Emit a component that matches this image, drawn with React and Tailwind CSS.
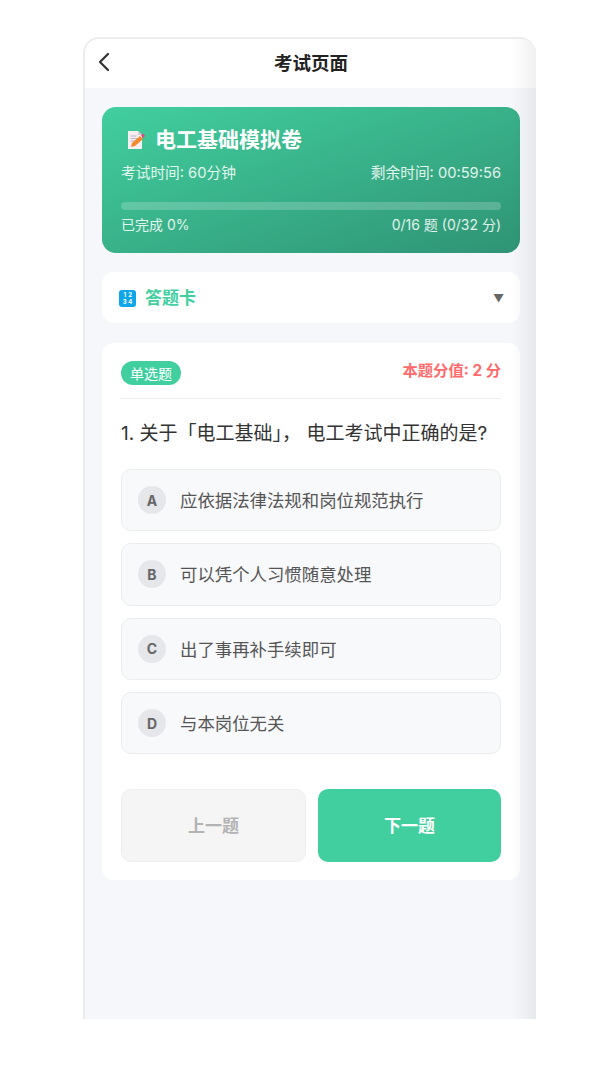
import { ChevronLeft } from 'lucide-react';

const options = [
  { key: 'A', text: '应依据法律法规和岗位规范执行' },
  { key: 'B', text: '可以凭个人习惯随意处理' },
  { key: 'C', text: '出了事再补手续即可' },
  { key: 'D', text: '与本岗位无关' },
];

// Memo emoji, drawn because no colour emoji font is available
const MemoIcon = () => (
  <svg width="22" height="22" viewBox="0 0 22 22" className="shrink-0">
    <path d="M3 2h10l4 4v14H3z" fill="#f6eef0" />
    <path d="M13 2l4 4h-4z" fill="#d9c8d4" />
    <path d="M5.500 7h6M5.500 9.500h8M5.500 12h5" stroke="#c3b4c9" strokeWidth="1" />
    <path d="M6 18l1-4 8-7 3 3-8 7z" fill="#f58a2c" />
    <path d="M16 6l2-1.500 2 2.500-2 2z" fill="#e8457c" />
  </svg>
);

const NumbersIcon = () => (
  <span className="mt-[1px] grid h-[17px] w-[17px] grid-cols-2 place-items-center rounded-[3px] bg-[#0ea5e9] px-[3px] py-[1px] text-[6px] font-bold leading-[7px] text-white">
    <span>1</span>
    <span>2</span>
    <span>3</span>
    <span>4</span>
  </span>
);

export default function App() {
  return (
    <div
      className="h-[1080px] bg-white pl-[83px] pt-[37px] text-[#333]"
      style={{ fontFamily: 'Inter, "Noto Sans CJK SC", sans-serif' }}
    >
      <div className="relative flex h-[982px] w-[453px] flex-col overflow-hidden rounded-t-[16px] border-l-2 border-t-2 border-[#ececec] bg-[#f5f7fa]">
        {/* Header */}
        <div className="flex h-[49px] shrink-0 items-center bg-white">
          <ChevronLeft className="ml-[3px] -mt-[3px] h-[32px] w-[32px] text-[#333]" strokeWidth={1.7} />
          <h1 className="ml-[154px] text-[18.500px] font-bold text-[#222]">考试页面</h1>
        </div>

        <div className="flex flex-col pl-[17px] pr-[17px] pt-[19px]">
          {/* Exam summary */}
          <div className="h-[146px] w-[418px] rounded-[14px] bg-gradient-to-br from-[#42cf9f] to-[#2f9474] px-[19px] pt-[19px] text-white">
            <div className="flex h-[28px] items-center gap-[8px] pl-[4px]">
              <MemoIcon />
              <span className="text-[21px] font-bold leading-[28px]">电工基础模拟卷</span>
            </div>
            <div className="mt-[9px] flex justify-between text-[14.700px] leading-[20px] text-white/85">
              <span>考试时间: 60分钟</span>
              <span>剩余时间: 00:59:56</span>
            </div>
            <div className="mt-[19px] h-[8px] rounded-full bg-white/20" />
            <div className="mt-[6px] flex justify-between text-[14px] leading-[18px] text-white/85">
              <span>已完成 0%</span>
              <span>0/16 题 (0/32 分)</span>
            </div>
          </div>

          {/* Answer sheet toggle */}
          <div className="mt-[19px] flex h-[51px] w-[418px] items-center rounded-[12px] bg-white pl-[17px] pr-[16px]">
            <NumbersIcon />
            <span className="ml-[9px] mt-[2px] text-[17px] font-bold text-[#42cf9f]">答题卡</span>
            <span className="ml-auto mt-[1px] text-[11px] text-[#666]">▼</span>
          </div>

          {/* Question */}
          <div className="mt-[20px] h-[537px] w-[418px] rounded-[12px] bg-white px-[19px] pt-[18px]">
            <div className="flex items-center justify-between border-b border-[#f0f0f0] pb-[13px]">
              <span className="flex h-[24px] w-[60px] items-center justify-center rounded-full bg-[#42cf9f] text-[14px] text-white">
                单选题
              </span>
              <span className="-mt-[3px] text-[15.300px] font-bold text-[#ff6b6b]">本题分值: 2 分</span>
            </div>
            <p className="mt-[22px] text-[19px] leading-[26px] text-[#333]">
              1. 关于「电工基础」， 电工考试中正确的是?
            </p>

            <div className="mt-[22px] flex flex-col gap-[12px]">
              {options.map((option) => (
                <div
                  key={option.key}
                  className="flex h-[62.300px] items-center rounded-[10px] border border-[#ebedf0] bg-[#f8f9fb] pl-[16px]"
                >
                  <span className="flex h-[28px] w-[28px] items-center justify-center rounded-full bg-[#e5e7eb] text-[14px] font-bold text-[#666]">
                    {option.key}
                  </span>
                  <span className="ml-[14px] mt-[2px] text-[17.400px] text-[#555]">{option.text}</span>
                </div>
              ))}
            </div>

            <div className="mt-[35px] flex gap-[12px]">
              <button className="h-[73px] flex-1 rounded-[10px] border border-[#eee] bg-[#f5f5f5] pt-[3px] text-[17px] font-bold text-[#b3b3b3]">
                上一题
              </button>
              <button className="h-[73px] flex-1 rounded-[10px] bg-[#42cf9f] pt-[3px] text-[17px] font-bold text-white">
                下一题
              </button>
            </div>
          </div>
        </div>

        {/* Soft shadow along the right edge */}
        <div className="pointer-events-none absolute inset-y-0 right-0 w-[24px] bg-gradient-to-r from-transparent to-black/[0.06]" />
      </div>
    </div>
  );
}
